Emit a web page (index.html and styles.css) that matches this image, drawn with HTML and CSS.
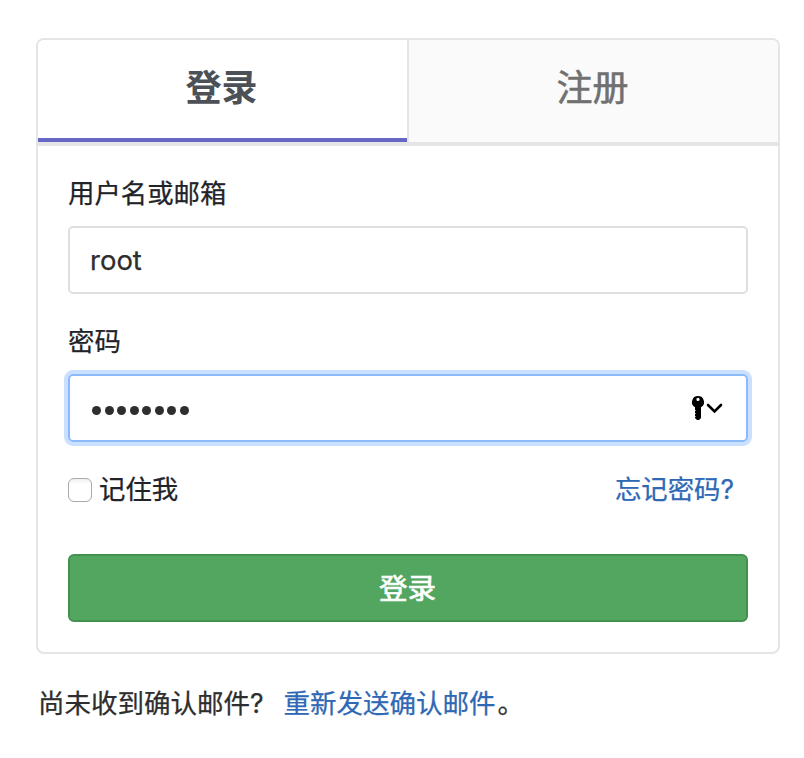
FILE: index.html
```html
<!DOCTYPE html>
<html lang="zh-CN">
<head>
<meta charset="utf-8">
<title>登录</title>
<link rel="stylesheet" href="styles.css">
</head>
<body>
<main class="card">
  <nav class="tabs">
    <a class="tab active">登录</a>
    <a class="tab">注册</a>
  </nav>
  <form class="form">
    <label class="label" for="user">用户名或邮箱</label>
    <div class="field"><input id="user" class="input" type="text" value="root"></div>
    <label class="label second" for="pass">密码</label>
    <div class="field focused">
      <span class="dots" id="pass"><i></i><i></i><i></i><i></i><i></i><i></i><i></i><i></i></span>
      <svg class="key" width="32" height="26" viewBox="0 0 32 26">
        <path fill-rule="evenodd" d="M7 1a6 6 0 0 1 3 11.200V23l-2 2H6l-2-2V12.200A6 6 0 0 1 7 1Zm0 1.800a1.600 1.600 0 1 0 0 3.200a1.600 1.600 0 0 0 0-3.200Z"/>
        <path class="teeth" d="M4 15.500h.6M4 18.500h.6M4 21.500h.6"/>
        <path class="chevron" d="m17 10 6.500 6.500L30 10"/>
      </svg>
    </div>
    <div class="options">
      <label class="remember"><span class="box"></span>记住我</label>
      <a class="link">忘记密码?</a>
    </div>
    <button class="submit" type="button">登录</button>
  </form>
</main>
<p class="resend">尚未收到确认邮件?<a class="link">重新发送确认邮件</a><span class="stop">。</span></p>
</body>
</html>
```
FILE: styles.css
```css
* { box-sizing: border-box; }
body {
  margin: 0;
  padding: 38px 24px 0 36px;
  background: #fff;
  color: #212329;
  font: 26.4px/36px Inter, "Noto Sans CJK SC", sans-serif;
  -webkit-text-stroke: 0.25px;
}
.card {
  height: 616px;
  border: 2px solid #e5e5e5;
  border-radius: 8px;
  overflow: hidden;
}
.tabs {
  display: flex;
  height: 106px;
  border-bottom: 4px solid #e5e5e5;
}
.tab {
  flex: 1;
  padding: 21px 2px 0 0;
  background: #fafafa;
  color: #707070;
  font-size: 36px;
  line-height: 54px;
  text-align: center;
  -webkit-text-stroke: 0.6px;
}
.tab.active {
  flex: 0 0 369px;
  background: #fff;
  border-bottom: 4px solid #6666c4;
  color: #4c5157;
  font-weight: 700;
  -webkit-text-stroke: 0;
}
.tab + .tab { border-left: 2px solid #e5e5e5; }
.form { padding: 29px 30px 30px; }
.label {
  display: block;
  height: 51px;
}
.second { margin-top: 29px; }
.field {
  display: flex;
  align-items: center;
  justify-content: space-between;
  height: 68px;
  padding: 0 23px 0 20px;
  border: 2px solid #dfdfdf;
  border-radius: 5px;
}
.focused {
  padding-left: 22px;
  border-color: #8bbafa;
  box-shadow: 0 0 0 4px #cbdffe;
}
.input {
  width: 100%;
  padding: 0;
  border: 0;
  outline: 0;
  background: none;
  color: #2e2e2e;
  font: 27.5px/36px Inter, sans-serif;
}
.dots {
  display: flex;
  gap: 3.500px;
  padding-top: 4px;
}
.dots i {
  width: 9px;
  height: 9px;
  border-radius: 50%;
  background: #2e2e2e;
}
.key { display: block; }
.chevron {
  fill: none;
  stroke: #000;
  stroke-width: 2.600;
  stroke-linecap: round;
}
.teeth { stroke: #fff; stroke-width: 1; }
.options {
  display: flex;
  justify-content: space-between;
  height: 36px;
  margin-top: 29px;
  padding-right: 14px;
}
.remember {
  display: flex;
  align-items: center;
  gap: 7px;
}
.box {
  width: 24px;
  height: 24px;
  margin-top: 2px;
  border: 1px solid #a9a9a9;
  border-radius: 6px;
  background: linear-gradient(#f0f0f0, #fff 5px);
}
.link { color: #2f68b4; }
.submit {
  display: block;
  width: 100%;
  height: 68px;
  margin-top: 47px;
  padding: 0 1px 3px 0;
  border: 2px solid #42914f;
  border-radius: 6px;
  background: #52a660;
  color: #fff;
  font: 28.5px/36px "Noto Sans CJK SC", sans-serif;
  -webkit-text-stroke: 0.7px;
}
.resend {
  margin: 31px 0 0 2px;
  color: #2e2e2e;
  font-size: 26.5px;
}
.resend .link { margin-left: 20px; }
.stop { margin-left: 2px; }
```
